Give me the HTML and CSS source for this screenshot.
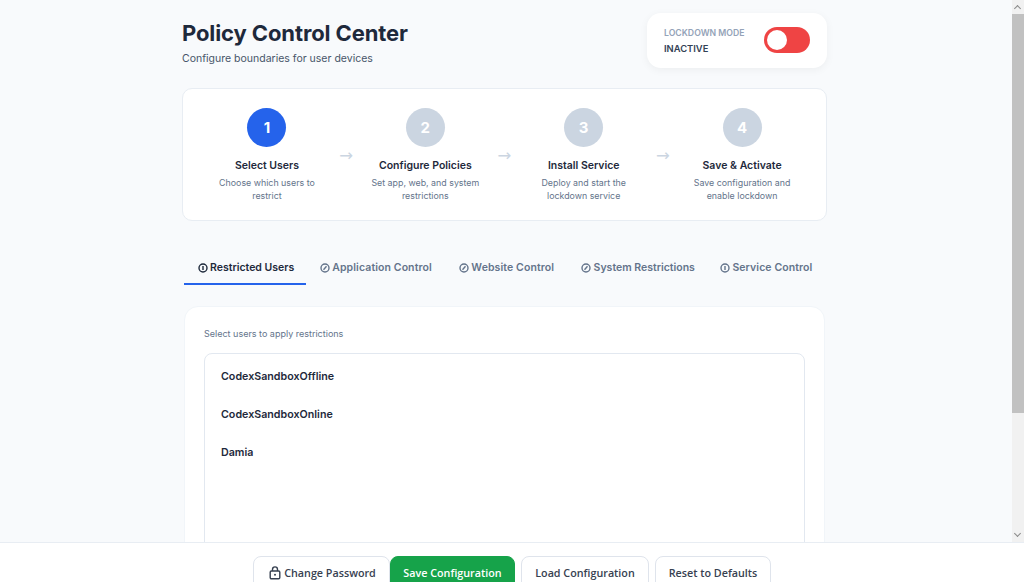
FILE: index.html
```html
<!DOCTYPE html>
<html lang="en">
<head>
  <meta charset="UTF-8" />
  <title>Policy Control Center</title>
  <link rel="stylesheet" href="styles.css">
</head>
<body>

  <div class="scroll-area">
    <main class="page">
      <header class="page-header">
        <div>
          <h1>Policy Control Center</h1>
          <p class="subtitle">Configure boundaries for user devices</p>
        </div>
        <div class="lockdown-card">
          <div class="lockdown-text">
            <div class="lockdown-label">LOCKDOWN MODE</div>
            <div class="lockdown-state">INACTIVE</div>
          </div>
          <div class="toggle"><div class="toggle-knob"></div></div>
        </div>
      </header>

      <section class="steps">
        <div class="step">
          <div class="step-num active">1</div>
          <div class="step-title">Select Users</div>
          <div class="step-desc">Choose which users to restrict</div>
        </div>
        <div class="step-arrow">&rarr;</div>
        <div class="step">
          <div class="step-num">2</div>
          <div class="step-title">Configure Policies</div>
          <div class="step-desc">Set app, web, and system restrictions</div>
        </div>
        <div class="step-arrow">&rarr;</div>
        <div class="step">
          <div class="step-num">3</div>
          <div class="step-title">Install Service</div>
          <div class="step-desc">Deploy and start the lockdown service</div>
        </div>
        <div class="step-arrow">&rarr;</div>
        <div class="step">
          <div class="step-num">4</div>
          <div class="step-title">Save &amp; Activate</div>
          <div class="step-desc">Save configuration and enable lockdown</div>
        </div>
      </section>

      <nav class="tabs">
        <div class="tab active">
          <svg class="tab-icon" viewBox="0 0 10 10"><circle cx="5" cy="5" r="4"/><path d="M5 2.9v4.2"/></svg>
          Restricted Users
        </div>
        <div class="tab">
          <svg class="tab-icon" viewBox="0 0 10 10"><circle cx="5" cy="5" r="4"/><path d="M3.5 6.7 6.5 3.3"/></svg>
          Application Control
        </div>
        <div class="tab">
          <svg class="tab-icon" viewBox="0 0 10 10"><circle cx="5" cy="5" r="4"/><path d="M3.5 6.7 6.5 3.3"/></svg>
          Website Control
        </div>
        <div class="tab tab-narrow">
          <svg class="tab-icon" viewBox="0 0 10 10"><circle cx="5" cy="5" r="4"/><path d="M3.5 6.7 6.5 3.3"/></svg>
          System Restrictions
        </div>
        <div class="tab">
          <svg class="tab-icon" viewBox="0 0 10 10"><circle cx="5" cy="5" r="4"/><path d="M5 2.9v4.2"/></svg>
          Service Control
        </div>
      </nav>

      <section class="panel">
        <p class="panel-hint">Select users to apply restrictions</p>
        <div class="user-list">
          <div class="user">CodexSandboxOffline</div>
          <div class="user">CodexSandboxOnline</div>
          <div class="user">Damia</div>
        </div>
      </section>
    </main>

    <div class="scrollbar">
      <div class="scroll-btn up"></div>
      <div class="scroll-thumb"></div>
      <div class="scroll-rest"></div>
      <div class="scroll-btn down"></div>
    </div>
  </div>

  <footer class="action-bar">
    <button class="btn btn-password">
      <svg class="lock-icon" viewBox="0 0 12 14" width="12" height="14" fill="none" stroke="#374151" stroke-width="1.4">
        <path d="M3.5 5V3.4a2.5 2.5 0 0 1 5 0V5"/>
        <rect x="1.2" y="5" width="9.6" height="7.8" rx="1.2"/>
        <circle cx="6" cy="8.8" r="1" fill="#374151" stroke="none"/>
      </svg>
      Change Password
    </button>
    <button class="btn btn-save">Save Configuration</button>
    <button class="btn btn-load">Load Configuration</button>
    <button class="btn btn-reset">Reset to Defaults</button>
  </footer>

</body>
</html>
```

FILE: styles.css
```css
* { margin: 0; padding: 0; box-sizing: border-box; }

html, body {
  height: 100%;
  overflow: hidden;
}

body {
  font-family: Inter, 'Noto Sans', sans-serif;
  background-color: #f8fafc;
  color: #1e293b;
  display: flex;
  flex-direction: column;
}

.scroll-area {
  display: flex;
  height: 542px;
  overflow: hidden;
}

.page {
  flex: 1;
  padding: 13px 185px 0 182px;
  overflow: hidden;
}

/* Header */
.page-header {
  display: flex;
  justify-content: space-between;
  align-items: flex-start;
  height: 75px;
}

h1 {
  font-size: 22px;
  font-weight: 700;
  line-height: 30px;
  margin-top: 5px;
  letter-spacing: -0.1px;
}

.subtitle {
  font-size: 10.5px;
  line-height: 16px;
  margin-top: 3px;
  color: #475569;
}

.lockdown-card {
  width: 180px;
  height: 55px;
  background: white;
  border-radius: 14px;
  box-shadow: 0 2px 8px rgba(0,0,0,0.05);
  display: flex;
  justify-content: space-between;
  align-items: center;
  padding: 0 17px 1px 17px;
}

.lockdown-label {
  font-size: 8.7px;
  font-weight: 600;
  color: #94a3b8;
  line-height: 13px;
  margin-top: 1px;
}

.lockdown-state {
  font-size: 9.4px;
  font-weight: 600;
  color: #334155;
  line-height: 13px;
  margin-top: 2px;
}

.toggle {
  width: 46px;
  height: 26px;
  background: #ef4444;
  border-radius: 13px;
  padding: 3px;
}

.toggle-knob {
  width: 20px;
  height: 20px;
  background: white;
  border-radius: 50%;
}

/* Steps */
.steps {
  display: flex;
  justify-content: space-between;
  height: 133px;
  background: white;
  border: 1px solid #e8edf3;
  border-radius: 10px;
  padding: 19px 16px 0 16px;
}

.step {
  width: 136px;
  display: flex;
  flex-direction: column;
  align-items: center;
  text-align: center;
}

.step-num {
  width: 39px;
  height: 39px;
  border-radius: 50%;
  background: #cbd5e1;
  color: white;
  font-size: 15px;
  font-weight: 700;
  display: flex;
  justify-content: center;
  align-items: center;
}

.step-num.active {
  background: #2563eb;
}

.step-title {
  font-size: 10.5px;
  font-weight: 600;
  line-height: 14px;
  margin-top: 12px;
}

.step-desc {
  max-width: 118px;
  font-size: 8.85px;
  line-height: 13px;
  margin-top: 3px;
  color: #64748b;
}

.step-arrow {
  width: 22.5px;
  text-align: center;
  font-family: 'DejaVu Sans', sans-serif;
  font-size: 16.5px;
  line-height: 18px;
  color: #cbd5e1;
  margin-top: 39px;
}

/* Tabs */
.tabs {
  display: flex;
  margin-top: 30px;
  height: 34px;
  padding-left: 2px;
}

.tab {
  display: flex;
  align-items: flex-start;
  gap: 2.5px;
  font-size: 10.5px;
  font-weight: 600;
  line-height: 14px;
  padding: 10px 13.5px 0 13.5px;
  color: #64748b;
  letter-spacing: 0.1px;
  white-space: nowrap;
}

.tab.active {
  color: #1e293b;
  letter-spacing: 0;
  padding-right: 12px;
  border-bottom: 2px solid #2563eb;
}

.tab-narrow {
  letter-spacing: 0;
  padding-right: 11.5px;
}

.tab.active + .tab {
  padding-left: 13.5px;
}

.tab-icon {
  width: 10px;
  height: 10px;
  margin-top: 2px;
  flex-shrink: 0;
  fill: none;
  stroke: currentColor;
  stroke-width: 1.4;
}

/* Panel */
.panel {
  margin: 21px 2px 0 2px;
  height: 300px;
  background: white;
  border-radius: 14px;
  border: 1px solid #f1f5f9;
  padding: 20px 19px 0 19px;
}

.panel-hint {
  font-size: 9px;
  line-height: 13px;
  color: #64748b;
}

.user-list {
  height: 300px;
  margin-top: 13px;
  border: 1px solid #e2e8f0;
  border-radius: 8px;
  padding: 4px 16px;
}

.user {
  font-size: 10.7px;
  font-weight: 600;
  line-height: 14px;
  padding: 12px 0;
  color: #1e293b;
}

/* Fake window scrollbar */
.scrollbar {
  width: 12px;
  background: #f1f1f1;
  display: flex;
  flex-direction: column;
}

.scroll-btn {
  height: 14px;
  flex-shrink: 0;
  position: relative;
}

.scroll-btn::after {
  content: "";
  position: absolute;
  left: 3px;
  width: 4px;
  height: 4px;
  border-left: 1px solid #8a8a8a;
  border-top: 1px solid #8a8a8a;
}

.scroll-btn.up::after {
  top: 6px;
  transform: rotate(45deg);
}

.scroll-btn.down::after {
  top: 3px;
  transform: rotate(225deg);
}

.scroll-thumb {
  height: 399px;
  background: #c1c1c1;
}

.scroll-rest {
  flex: 1;
}

/* Bottom bar */
.action-bar {
  flex: 1;
  background: white;
  border-top: 1px solid #e8edf3;
  padding: 13px 0 0 253px;
  display: flex;
  align-items: flex-start;
  overflow: hidden;
}

.btn {
  font-family: 'Open Sans', 'Noto Sans', sans-serif;
  font-size: 10.75px;
  font-weight: 600;
  height: 34px;
  background: white;
  color: #374151;
  border: 1px solid #dfe4ec;
  border-radius: 8px;
  flex-shrink: 0;
  display: flex;
  justify-content: center;
  align-items: center;
  gap: 3px;
}

.btn-password { width: 137px; padding-left: 2px; }
.btn-save {
  width: 125px;
  background: #16a34a;
  border-color: #16a34a;
  color: white;
}
.btn-load { width: 128px; margin-left: 6px; }
.btn-reset { width: 116px; margin-left: 6px; }
```
